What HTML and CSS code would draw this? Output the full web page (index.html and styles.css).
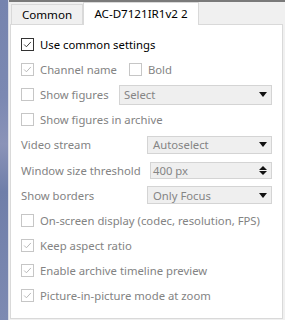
FILE: index.html
```html
<!DOCTYPE html>
<html>
<head>
<meta charset="utf-8">
<link rel="stylesheet" href="styles.css">
</head>
<body>
<div class="app">
  <div class="strip"></div>
  <div class="main">
    <div class="tabs">
      <div class="tab">Common</div>
      <div class="tab active">AC-D7121IR1v2 2</div>
    </div>
    <div class="panel">
      <div class="row"><span class="cb on"><svg viewBox="0 0 13 13"><path d="M2.5 6.5 L5.2 9.2 L10.5 3.5"/></svg></span><span class="lbl dark">Use common settings</span></div>
      <div class="row"><span class="cb"><svg viewBox="0 0 13 13"><path d="M2.5 6.5 L5.2 9.2 L10.5 3.5"/></svg></span><span class="lbl">Channel name</span><span class="cb second"></span><span class="lbl">Bold</span></div>
      <div class="row"><span class="cb"></span><span class="lbl w-fig">Show figures</span><div class="combo wide"><span>Select</span><span class="arrow"></span></div></div>
      <div class="row"><span class="cb"></span><span class="lbl">Show figures in archive</span></div>
      <div class="row"><span class="lbl field">Video stream</span><div class="combo"><span>Autoselect</span><span class="arrow"></span></div></div>
      <div class="row"><span class="lbl field">Window size threshold</span><div class="combo spin"><span>400 px</span><span class="spinner"><span class="up"></span><span class="down"></span></span></div></div>
      <div class="row"><span class="lbl field">Show borders</span><div class="combo"><span>Only Focus</span><span class="arrow"></span></div></div>
      <div class="row"><span class="cb"></span><span class="lbl">On-screen display (codec, resolution, FPS)</span></div>
      <div class="row"><span class="cb"><svg viewBox="0 0 13 13"><path d="M2.5 6.5 L5.2 9.2 L10.5 3.5"/></svg></span><span class="lbl">Keep aspect ratio</span></div>
      <div class="row"><span class="cb"><svg viewBox="0 0 13 13"><path d="M2.5 6.5 L5.2 9.2 L10.5 3.5"/></svg></span><span class="lbl">Enable archive timeline preview</span></div>
      <div class="row"><span class="cb"><svg viewBox="0 0 13 13"><path d="M2.5 6.5 L5.2 9.2 L10.5 3.5"/></svg></span><span class="lbl">Picture-in-picture mode at zoom</span></div>
    </div>
  </div>
</div>
</body>
</html>
```
FILE: styles.css
```css
html, body {
  margin: 0;
  padding: 0;
}
body {
  width: 285px;
  height: 320px;
  overflow: hidden;
  background: #f0f0f0;
  font-family: "Noto Sans", "Open Sans", sans-serif;
  font-size: 11.3px;
  color: #838383;
}
.app {
  display: flex;
  height: 320px;
}
.strip {
  width: 8px;
  flex: none;
  background: linear-gradient(180deg, #7684ae 0%, #7b88b2 30%, #8a93b8 45%, #6f7ea9 60%, #7d8ab2 100%);
  border-right: 1px solid #d8dbe4;
}
.main {
  flex: 1;
  display: flex;
  flex-direction: column;
  border-top: 2px solid #7a7a7a;
  padding: 0 2px 0 1px;
}
.tabs {
  display: flex;
  align-items: flex-end;
  height: 22px;
  padding-left: 1px;
}
.tab {
  box-sizing: border-box;
  height: 20px;
  width: 72px;
  border: 1px solid #d9d9d9;
  border-bottom: none;
  background: #f0f0f0;
  color: #000;
  display: flex;
  align-items: center;
  justify-content: center;
  font-size: 11.6px;
}
.tab.active {
  width: 116px;
  height: 23px;
  margin-bottom: -1px;
  background: #fff;
  position: relative;
  z-index: 1;
  padding-bottom: 2px;
}
.panel {
  flex: 1;
  background: #fff;
  border: 1px solid #d9d9d9;
  margin-bottom: 1px;
  padding: 7px 10px 0 10px;
}
.row {
  display: flex;
  align-items: center;
  height: 25.1px;
}
.cb {
  box-sizing: border-box;
  width: 13px;
  height: 13px;
  flex: none;
  border: 1px solid #c6c6c6;
  background: #fff;
  margin-right: 6px;
  display: flex;
}
.cb svg {
  width: 11px;
  height: 11px;
  fill: none;
  stroke: #b4b4b4;
  stroke-width: 1.1;
}
.cb.on {
  border-color: #333;
}
.cb.on svg {
  stroke: #333;
}
.cb.second {
  margin-left: 12px;
}
.lbl {
  white-space: nowrap;
}
.lbl.dark {
  color: #000;
}
.lbl.w-fig {
  width: 79px;
}
.lbl.field {
  width: 126px;
  flex: none;
}
.combo {
  box-sizing: border-box;
  flex: 1;
  height: 18px;
  background: #efefef;
  border: 1px solid #d4d4d4;
  display: flex;
  align-items: center;
  justify-content: space-between;
  padding: 0 4px 0 5px;
  color: #858585;
}
.combo.wide {
  height: 20px;
  padding-left: 4px;
}
.combo.spin {
  margin-left: 3px;
  height: 17px;
  padding-left: 2px;
}
.arrow {
  width: 0;
  height: 0;
  border-left: 4px solid transparent;
  border-right: 4px solid transparent;
  border-top: 5px solid #111;
}
.spinner {
  display: flex;
  flex-direction: column;
  gap: 1px;
}
.up {
  width: 0;
  height: 0;
  border-left: 4px solid transparent;
  border-right: 4px solid transparent;
  border-bottom: 4px solid #111;
}
.down {
  width: 0;
  height: 0;
  border-left: 4px solid transparent;
  border-right: 4px solid transparent;
  border-top: 4px solid #111;
}
```
